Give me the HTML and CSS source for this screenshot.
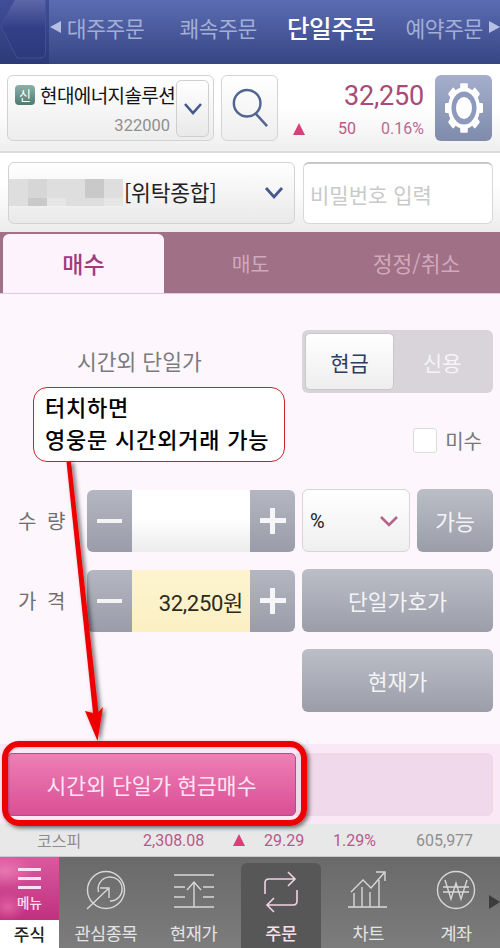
FILE: index.html
```html
<!DOCTYPE html>
<html lang="ko">
<head>
    <meta charset="UTF-8">
    <meta name="viewport" content="width=device-width, initial-scale=1.0">
    <title>단일주문</title>
    <link rel="stylesheet" href="styles.css">
</head>
<body>
    <div class="page">
        <header class="top-bar">
            <div class="back-btn">
                <svg viewBox="0 0 46 60" width="46" height="60">
                    <defs>
                        <linearGradient id="back-fill" x1="0" y1="0" x2="0" y2="1">
                            <stop offset="0" stop-color="#5d69a9"/>
                            <stop offset="0.5" stop-color="#323f86"/>
                            <stop offset="1" stop-color="#2c3a7c"/>
                        </linearGradient>
                    </defs>
                    <path d="M1 26 L15 -1 H45.5 V52 Q45.5 58 39 58 H17 Z" fill="url(#back-fill)" stroke="#46539a" stroke-width="0.8"/>
                </svg>
            </div>
            <div class="top-tabs">
                <span class="arrow-l"></span>
                <span class="top-tab t1">대주주문</span>
                <span class="top-tab t2">쾌속주문</span>
                <span class="top-tab active">단일주문</span>
                <span class="top-tab t4">예약주문</span>
                <span class="arrow-r"></span>
            </div>
        </header>

        <section class="stock-row">
            <div class="stock-box">
                <div class="stock-info">
                    <div class="stock-name"><span class="badge">신</span>현대에너지솔루션</div>
                    <div class="stock-code">322000</div>
                </div>
                <div class="stock-drop">
                    <svg viewBox="0 0 20 14" width="20" height="14"><path d="M2 2 L10 11 L18 2" fill="none" stroke="#46588c" stroke-width="2.6"/></svg>
                </div>
            </div>
            <div class="search-btn">
                <svg viewBox="0 0 40 44" width="38" height="42"><circle cx="17" cy="17" r="14" fill="none" stroke="#52658f" stroke-width="2.6"/><path d="M26 28 L38 41" stroke="#52658f" stroke-width="2.6"/></svg>
            </div>
            <div class="quote">
                <div class="quote-price">32,250</div>
                <div class="quote-sub">
                    <span class="tri"></span>
                    <span class="quote-diff">50</span>
                    <span class="quote-pct">0.16%</span>
                </div>
            </div>
            <div class="gear-btn">
                <svg viewBox="0 0 38 50" width="38" height="50">
                    <g fill="#fff" transform="translate(19 25) scale(1 1.3)">
                        <rect x="-3.8" y="-19" width="7.6" height="38" rx="1"/>
                        <rect x="-3.8" y="-19" width="7.6" height="38" rx="1" transform="rotate(45)"/>
                        <rect x="-3.8" y="-19" width="7.6" height="38" rx="1" transform="rotate(90)"/>
                        <rect x="-3.8" y="-19" width="7.6" height="38" rx="1" transform="rotate(135)"/>
                        <circle r="16"/>
                    </g>
                    <ellipse cx="19" cy="25" rx="12.5" ry="16.5" fill="#8d9abd"/>
                    <ellipse cx="19" cy="25" rx="8" ry="11" fill="#fff"/>
                </svg>
            </div>
        </section>

        <section class="account-row">
            <div class="account-select">
                <div class="mosaic">
                    <i class="m1"></i><i class="m2"></i><i class="m1"></i><i class="m1"></i><i class="m3"></i><i class="m1"></i>
                    <i class="m1"></i><i class="m2"></i><i class="m1"></i><i class="m1"></i><i class="m3"></i><i class="m1"></i>
                    <i class="m1"></i><i class="m3"></i><i class="m4"></i><i class="m1"></i><i class="m1"></i><i class="m4"></i>
                </div>
                <span class="account-type">[위탁종합]</span>
                <svg class="account-chev" viewBox="0 0 20 14" width="20" height="14"><path d="M2 2 L10 11 L18 2" fill="none" stroke="#46588c" stroke-width="2.8"/></svg>
            </div>
            <div class="password">비밀번호 입력</div>
        </section>

        <nav class="order-tabs">
            <div class="order-tab active">매수</div>
            <div class="order-tab">매도</div>
            <div class="order-tab">정정/취소</div>
        </nav>

        <main class="form">
            <div class="form-row first">
                <div class="form-left session">시간외 단일가</div>
                <div class="toggle">
                    <div class="toggle-on">현금</div>
                    <div class="toggle-off">신용</div>
                </div>
            </div>
            <div class="check-row">
                <span class="checkbox"></span>
                <span class="check-label">미수</span>
            </div>
            <div class="form-row qty">
                <div class="form-left">
                    <span class="field-label">수 량</span>
                    <div class="stepper">
                        <span class="step"><b class="minus"></b></span>
                        <span class="step-value"></span>
                        <span class="step"><b class="plus"></b></span>
                    </div>
                </div>
                <div class="form-right">
                    <div class="unit-select">
                        <span>%</span>
                        <svg viewBox="0 0 20 12" width="20" height="12"><path d="M2 2 L10 10 L18 2" fill="none" stroke="#b6628f" stroke-width="2.6"/></svg>
                    </div>
                    <div class="gray-btn small">가능</div>
                </div>
            </div>
            <div class="form-row price">
                <div class="form-left">
                    <span class="field-label">가 격</span>
                    <div class="stepper">
                        <span class="step"><b class="minus"></b></span>
                        <span class="step-value yellow">32,250원</span>
                        <span class="step"><b class="plus"></b></span>
                    </div>
                </div>
                <div class="gray-btn wide">단일가호가</div>
            </div>
            <div class="form-row now">
                <div class="gray-btn wide">현재가</div>
            </div>
        </main>

        <section class="action-bar">
            <div class="buy-btn">시간외 단일가 현금매수</div>
            <div class="buy-blank"></div>
        </section>

        <section class="index-bar">
            <span class="idx-name">코스피</span>
            <span class="idx-val">2,308.08</span>
            <span class="tri"></span>
            <span class="idx-diff">29.29</span>
            <span class="idx-pct">1.29%</span>
            <span class="idx-vol">605,977</span>
        </section>

        <nav class="bottom-nav">
            <div class="menu-col">
                <div class="menu-btn">
                    <span class="burger"><i></i><i></i><i></i></span>
                    <span class="menu-text">메뉴</span>
                </div>
                <div class="menu-stock">주식</div>
            </div>
            <div class="nav-item">
                <svg viewBox="0 0 40 44" width="40" height="44" fill="none" stroke="#d8d8d8" stroke-width="1.4">
                    <circle cx="20" cy="20" r="18.5"/>
                    <path d="M12.5 22 A12 12 0 1 1 24 31"/>
                    <path d="M1 39 L23 18 M14 18 H23 V28"/>
                </svg>
                <span>관심종목</span>
            </div>
            <div class="nav-item">
                <svg viewBox="0 0 42 44" width="42" height="44" fill="none" stroke="#d8d8d8" stroke-width="1.4">
                    <path d="M1 5 H41 M1 17 H12 M30 17 H41 M1 27 H12 M30 27 H41 M1 37 H41 M21 37 V12 M14 20 L21 12 L28 20"/>
                </svg>
                <span>현재가</span>
            </div>
            <div class="nav-item current">
                <svg viewBox="0 0 38 44" width="38" height="44" fill="none" stroke="#f0d4e4" stroke-width="1.6">
                    <path d="M3 24 V13 Q3 9 7 9 H33 M26 2 L33 9 L26 16"/>
                    <path d="M35 20 V31 Q35 35 31 35 H5 M12 28 L5 35 L12 42"/>
                </svg>
                <span>주문</span>
            </div>
            <div class="nav-item">
                <svg viewBox="0 0 40 44" width="40" height="44" fill="none" stroke="#d8d8d8" stroke-width="1.4">
                    <path d="M0 37 H39 M6 37 V23 M14 37 V17 M22 37 V22 M31 37 V10 M3 22 L15 10 L23 18 L36 3 M28 2 H37 V11"/>
                </svg>
                <span>차트</span>
            </div>
            <div class="nav-item">
                <svg viewBox="0 0 40 44" width="40" height="44" fill="none" stroke="#d8d8d8" stroke-width="1.4">
                    <circle cx="20" cy="20" r="18.5"/>
                    <path d="M9 10 L15 29 L20 13 L25 29 L31 10 M7 17 H33 M7 22 H33"/>
                </svg>
                <span>계좌</span>
            </div>
            <span class="nav-more"></span>
        </nav>

        <!-- annotation drawn over the screenshot -->
        <div class="callout">터치하면<br>영웅문 시간외거래 가능</div>
        <div class="highlight"></div>
        <svg class="pointer" viewBox="0 0 500 948" width="500" height="948">
            <defs>
                <filter id="drop" x="-30%" y="-10%" width="160%" height="120%">
                    <feDropShadow dx="2.5" dy="1" stdDeviation="2" flood-color="#000" flood-opacity="0.55"/>
                </filter>
            </defs>
            <path filter="url(#drop)" fill="#ee0000" d="M66.5 462 L71 461.5 L98.5 712 L103 707 L97.5 741 L85 711 L93 713 Z"/>
        </svg>
    </div>
</body>
</html>
```

FILE: styles.css
```css
* {
    box-sizing: border-box;
}

body {
    margin: 0;
    font-family: "Noto Sans CJK KR", Roboto, sans-serif;
}

.page {
    position: relative;
    width: 500px;
    height: 948px;
    overflow: hidden;
    display: flex;
    flex-direction: column;
    background-color: #fdf6fd;
}

/* Top bar */
.top-bar {
    height: 64px;
    display: flex;
    background: linear-gradient(#5b6cb2, #364584);
}

.back-btn {
    width: 50px;
    background: linear-gradient(#3f4e98, #2d3a78);
    overflow: hidden;
}

.back-btn svg {
    display: block;
}

.top-tabs {
    flex: 1;
    display: flex;
    align-items: center;
    padding-bottom: 10px;
    color: #a3aed6;
    font-size: 21.5px;
}

.top-tab {
    white-space: nowrap;
    letter-spacing: -0.4px;
}

.top-tab.t1 {
    margin-left: 6px;
}

.top-tab.t2 {
    margin-left: 35px;
}

.top-tab.active {
    margin-left: 30px;
    color: #fff;
    font-size: 24.5px;
    font-weight: 500;
}

.top-tab.t4 {
    margin-left: 30px;
}

.arrow-l {
    width: 0;
    height: 0;
    margin-left: 1px;
    border-top: 6px solid transparent;
    border-bottom: 6px solid transparent;
    border-right: 11px solid #b7c0e2;
}

.arrow-r {
    width: 0;
    height: 0;
    margin-left: 6px;
    border-top: 6px solid transparent;
    border-bottom: 6px solid transparent;
    border-left: 11px solid #b7c0e2;
}

/* Stock row */
.stock-row {
    height: 89px;
    display: flex;
    padding: 11px 8px 0 7px;
    background: linear-gradient(#fff 50%, #efefef);
    border-bottom: 2px solid #dcdcdc;
}

.stock-box {
    width: 207px;
    height: 66px;
    display: flex;
    padding: 4px;
    border: 1px solid #d2d2d2;
    border-radius: 6px;
    background: linear-gradient(#fff, #ededed);
}

.stock-info {
    width: 164px;
    flex-shrink: 0;
}

.stock-name {
    display: flex;
    align-items: center;
    margin-top: 3px;
    font-size: 19px;
    line-height: 24px;
    letter-spacing: -0.6px;
    color: #111;
    white-space: nowrap;
}

.badge {
    width: 20px;
    height: 20px;
    margin: 0 5px 0 3px;
    flex-shrink: 0;
    border-radius: 4px;
    background: linear-gradient(#8fb0a8, #4e7a70);
    color: #fff;
    font-size: 13px;
    line-height: 20px;
    text-align: center;
    letter-spacing: 0;
}

.stock-code {
    margin-top: 9px;
    padding-right: 6px;
    text-align: right;
    font-family: Roboto, sans-serif;
    font-size: 16.5px;
    line-height: 20px;
    color: #8f8f8f;
}

.stock-drop {
    width: 34px;
    height: 57px;
    display: flex;
    align-items: center;
    justify-content: center;
    border: 1px solid #cfcfcf;
    border-radius: 5px;
    background: linear-gradient(#fff, #e9e9e9);
}

.search-btn {
    width: 57px;
    height: 66px;
    margin-left: 7px;
    display: flex;
    align-items: center;
    justify-content: center;
    border: 1px solid #d4d4d4;
    border-radius: 6px;
    background: linear-gradient(#fff, #eee);
}

.quote {
    width: 148px;
    padding-right: 2px;
    font-family: Roboto, sans-serif;
    color: #a94a78;
}

.quote-price {
    margin-top: 3px;
    text-align: right;
    font-size: 27px;
    line-height: 36px;
    letter-spacing: -0.2px;
}

.quote-sub {
    display: flex;
    align-items: center;
    margin-top: 5px;
    font-size: 16px;
    line-height: 20px;
    color: #c0568c;
}

.tri {
    width: 0;
    height: 0;
    border-left: 6.5px solid transparent;
    border-right: 6.5px solid transparent;
    border-bottom: 12px solid #d93f78;
}

.quote-sub .tri {
    margin-left: 15px;
}

.quote-diff {
    margin-left: 33px;
}

.quote-pct {
    margin-left: auto;
    color: #b96a94;
}

.gear-btn {
    width: 57px;
    height: 66px;
    margin-left: 9px;
    display: flex;
    align-items: center;
    justify-content: center;
    border-radius: 6px;
    background: linear-gradient(#a5afcc, #7f8bab);
}

/* Account row */
.account-row {
    height: 79px;
    display: flex;
    padding: 9px 7px 0 8px;
    background: linear-gradient(#fff 40%, #ececec);
}

.account-select {
    width: 287px;
    height: 62px;
    display: flex;
    align-items: center;
    border: 1px solid #d2d2d2;
    border-radius: 6px;
    background: linear-gradient(#fff, #e9e9e9);
}

.mosaic {
    width: 114px;
    height: 27px;
    margin-top: -2px;
    display: grid;
    grid-template-columns: repeat(6, 1fr);
    grid-template-rows: 14px 5px 8px;
}

.mosaic i {
    display: block;
}

.m1 {
    background-color: #dedede;
}

.m2 {
    background-color: #d6d6d6;
}

.m3 {
    background-color: #c9c9c9;
}

.m4 {
    background-color: #e6e6e6;
}

.account-type {
    margin-left: 1px;
    margin-top: -3px;
    font-size: 21.5px;
    color: #222;
    letter-spacing: -0.2px;
}

.account-chev {
    margin-left: auto;
    margin-right: 10px;
}

.password {
    width: 190px;
    height: 62px;
    margin-left: 8px;
    padding-left: 6px;
    display: flex;
    align-items: center;
    border: 1px solid #d8d8d8;
    border-top: 2px solid #c8c8c8;
    border-radius: 6px;
    background-color: #fff;
    font-size: 21px;
    color: #c9c9c9;
}

/* Order tabs */
.order-tabs {
    height: 62px;
    display: flex;
    padding: 2px 0 0 3px;
    background-color: #9f7086;
    border-bottom: 1px solid #e3c9dd;
}

.order-tab {
    width: 165px;
    padding-top: 9px;
    text-align: center;
    font-size: 20.5px;
    line-height: 40px;
    color: #d2a8bb;
}

.order-tab:last-child {
    flex: 1;
    padding-left: 0;
    font-size: 21.5px;
}

.order-tab.active {
    width: 161px;
    margin-right: 4px;
    border-radius: 6px 6px 0 0;
    background-color: #fdf3fd;
    color: #a23b7d;
    font-size: 23px;
    font-weight: 500;
}

/* Order form */
.form {
    flex: 1;
    padding: 36px 7px 0 18px;
}

.form-row {
    display: flex;
    justify-content: space-between;
}

.form-left {
    width: 277px;
    display: flex;
    align-items: center;
}

.session {
    padding-left: 59px;
    padding-bottom: 3px;
    font-size: 21.5px;
    color: #7b7b7b;
}

.toggle {
    width: 191px;
    height: 63px;
    display: flex;
    padding: 3px;
    border-radius: 6px;
    background-color: #d8d4d9;
}

.toggle-on {
    width: 89px;
    display: flex;
    align-items: center;
    justify-content: center;
    border: 1px solid #c8c8c8;
    border-radius: 5px;
    background: linear-gradient(#fff, #eeeeee);
    color: #2c3b60;
    font-size: 21px;
}

.toggle-off {
    flex: 1;
    display: flex;
    align-items: center;
    justify-content: center;
    color: #f6f4f6;
    font-size: 21px;
}

.check-row {
    height: 25px;
    margin-top: 35px;
    display: flex;
    align-items: center;
    justify-content: flex-end;
    padding-right: 11px;
}

.checkbox {
    width: 24px;
    height: 25px;
    border: 1px solid #dcdcdc;
    border-radius: 3px;
    background-color: #fff;
}

.check-label {
    margin-left: 8px;
    font-size: 20px;
    color: #777;
}

.form-row.qty {
    margin-top: 36px;
}

.form-row.price {
    margin-top: 17px;
}

.form-row.now {
    margin-top: 17px;
    justify-content: flex-end;
}

.field-label {
    width: 69px;
    font-size: 20px;
    color: #6f6f6f;
    word-spacing: 5px;
    white-space: nowrap;
}

.stepper {
    width: 208px;
    height: 62px;
    display: flex;
    border-radius: 6px;
    overflow: hidden;
}

.step {
    width: 45px;
    display: flex;
    align-items: center;
    justify-content: center;
    background: linear-gradient(#b4b7c1, #9a9da9);
}

.minus {
    display: block;
    width: 25px;
    height: 4px;
    background-color: #f4f4f6;
}

.plus {
    display: block;
    width: 26px;
    height: 26px;
    background: linear-gradient(#f6f6f8, #f6f6f8) center / 26px 5px no-repeat,
        linear-gradient(#f6f6f8, #f6f6f8) center / 5px 26px no-repeat;
}

.step-value {
    width: 118px;
    display: flex;
    align-items: center;
    justify-content: flex-end;
    padding-right: 7px;
    background: linear-gradient(#fff 45%, #ececec);
    font-family: Roboto, "Noto Sans CJK KR", sans-serif;
    font-size: 22px;
    color: #2c2a20;
    letter-spacing: -0.3px;
}

.step-value.yellow {
    background: linear-gradient(#fdf4cf, #fbf0c4);
}

.form-right {
    width: 191px;
    display: flex;
    justify-content: space-between;
}

.unit-select {
    width: 108px;
    height: 63px;
    display: flex;
    align-items: center;
    justify-content: space-between;
    padding: 0 10px 0 7px;
    border: 1px solid #d6d6d6;
    border-radius: 6px;
    background: linear-gradient(#fff, #efefef);
    font-family: Roboto, sans-serif;
    font-size: 20px;
    color: #222;
}

.gray-btn {
    height: 63px;
    display: flex;
    align-items: center;
    justify-content: center;
    border-radius: 6px;
    background: linear-gradient(#bbbdc7, #9b9ea9);
    color: #f4f4f6;
    font-size: 21.5px;
}

.gray-btn.small {
    width: 76px;
}

.gray-btn.wide {
    width: 191px;
}

/* Buy bar */
.action-bar {
    height: 80px;
    display: flex;
    padding: 9px 7px 0;
    background-color: #fae8f7;
}

.buy-btn {
    width: 289px;
    height: 63px;
    display: flex;
    align-items: center;
    justify-content: center;
    border: 1px solid #b05088;
    border-radius: 5px;
    background: linear-gradient(#ee7fb5, #d94f96);
    color: #fbe6f2;
    font-size: 21.5px;
}

.buy-blank {
    flex: 1;
    height: 63px;
    border: 1px solid #eed8e8;
    border-radius: 0 6px 6px 0;
    background-color: #efd9ea;
}

/* Index strip */
.index-bar {
    height: 33px;
    display: flex;
    align-items: center;
    background-color: #e9e8e9;
    border-bottom: 1px solid #c9c9c9;
    font-family: Roboto, sans-serif;
    font-size: 16px;
    color: #b45a8a;
}

.idx-name {
    width: 143px;
    padding-left: 37px;
    font-family: "Noto Sans CJK KR", sans-serif;
    font-size: 16px;
    color: #8d8d8d;
}

.idx-val {
    width: 90px;
}

.index-bar .tri {
    border-left-width: 6px;
    border-right-width: 6px;
}

.idx-diff {
    margin-left: 19px;
    width: 69px;
}

.idx-pct {
    width: 83px;
}

.idx-vol {
    color: #8f8f8f;
}

/* Bottom nav */
.bottom-nav {
    position: relative;
    height: 91px;
    display: flex;
    background: linear-gradient(#6a6a6a, #7c7c7c);
}

.menu-col {
    width: 59px;
    margin-right: 3px;
    display: flex;
    flex-direction: column;
}

.menu-btn {
    height: 63px;
    display: flex;
    flex-direction: column;
    align-items: center;
    padding-top: 11px;
    background: radial-gradient(ellipse 30px 16px at 5px 14px, rgba(240, 130, 185, 0.75), transparent),
        radial-gradient(ellipse 18px 14px at 8px 50px, rgba(240, 120, 180, 0.6), transparent),
        linear-gradient(#d95a9e, #c0307f);
}

.burger {
    display: flex;
    flex-direction: column;
    gap: 6px;
}

.burger i {
    display: block;
    width: 23px;
    height: 3px;
    background-color: #fbe3ef;
}

.menu-text {
    margin-top: 3px;
    font-size: 13.5px;
    line-height: 20px;
    font-weight: 500;
    color: #fbe3ef;
}

.menu-stock {
    flex: 1;
    background-color: #fff;
    color: #222;
    text-align: center;
    font-size: 17px;
    font-weight: 500;
    line-height: 27px;
}

.nav-item {
    width: 88px;
    display: flex;
    flex-direction: column;
    align-items: center;
    padding-top: 13px;
    color: #e4e4e4;
    font-size: 17.5px;
    white-space: nowrap;
}

.nav-item svg {
    flex-shrink: 0;
}

.nav-item span {
    margin-top: 5px;
    line-height: 28px;
    letter-spacing: -0.4px;
}

.nav-item.current {
    width: 81px;
    margin: 6px 3px 0;
    padding-top: 7px;
    border-radius: 6px 6px 0 0;
    background-color: #575757;
    color: #f7dfea;
    font-weight: 500;
}

.nav-more {
    position: absolute;
    right: 0;
    top: 38px;
    width: 0;
    height: 0;
    border-top: 7px solid transparent;
    border-bottom: 7px solid transparent;
    border-left: 11px solid #3c3c3c;
}

/* Annotation overlays */
.callout {
    position: absolute;
    left: 33px;
    top: 387px;
    width: 252px;
    height: 75px;
    padding: 2px 11px;
    border: 1px solid #c0272d;
    border-radius: 14px;
    background-color: #fff;
    color: #000;
    font-size: 22px;
    line-height: 32px;
    font-weight: 500;
    letter-spacing: 0.8px;
    white-space: nowrap;
}

.highlight {
    position: absolute;
    left: 2px;
    top: 741px;
    width: 305px;
    height: 85px;
    border: 6px solid #ee0000;
    border-radius: 17px;
    box-shadow: 2px 2px 4px rgba(0, 0, 0, 0.55), inset 1px 1px 2px rgba(0, 0, 0, 0.2);
}

.pointer {
    position: absolute;
    left: 0;
    top: 0;
    pointer-events: none;
}
```
